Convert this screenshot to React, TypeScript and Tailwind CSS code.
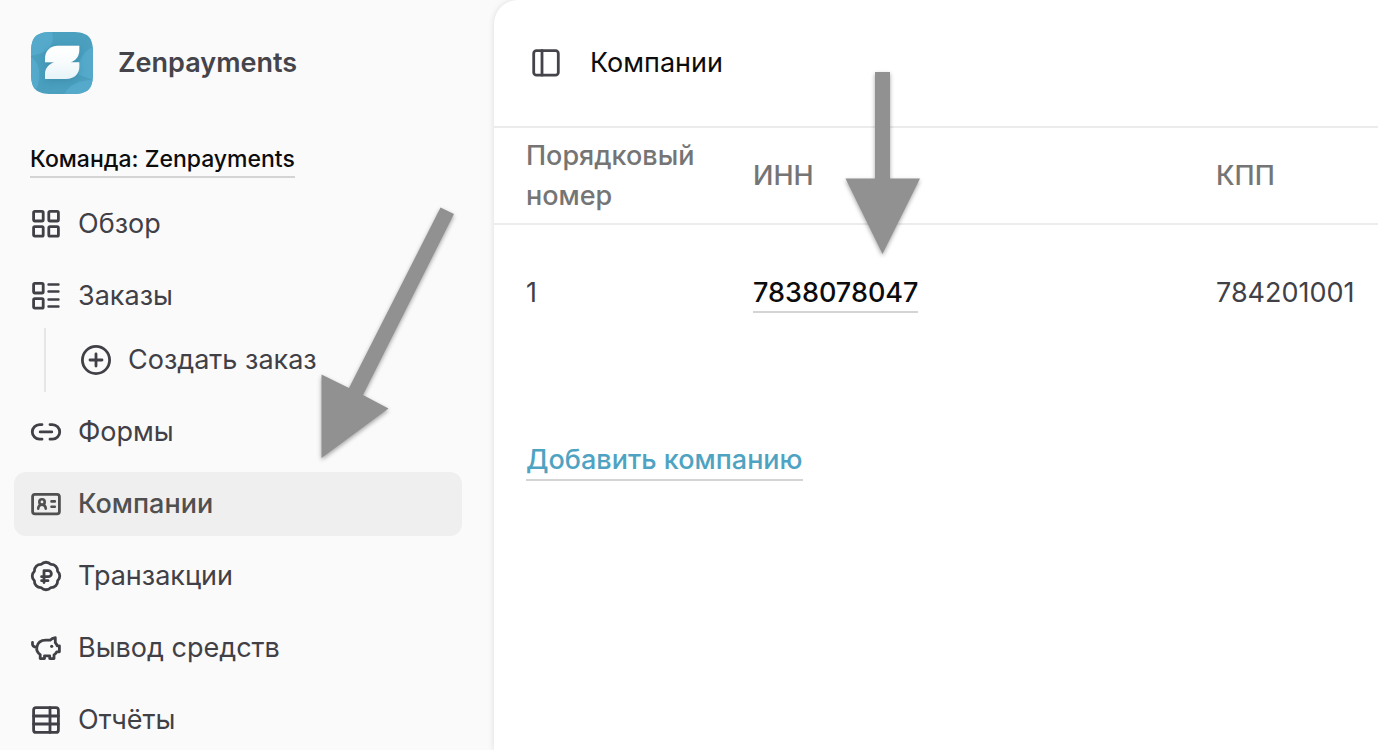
import type { ReactNode } from "react"

interface NavItem {
  label: string,
  icon: ReactNode,
  active?: boolean,
  children?: NavItem[]
}

interface Company {
  id: number,
  inn: string,
  kpp: string
}

function Icon(props: {children: ReactNode}) {
  return (
    <svg
      viewBox="0 0 32 32"
      fill="none"
      stroke="currentColor"
      strokeWidth="2.8"
      strokeLinecap="round"
      strokeLinejoin="round"
      className="size-8 shrink-0"
      aria-hidden="true"
    >
      {props.children}
    </svg>
  )
}

const GridIcon = () => (
  <Icon>
    <rect x="3.6" y="3.4" width="9.6" height="9.6" rx="1.2" />
    <rect x="18.8" y="3.4" width="9.6" height="9.6" rx="1.2" />
    <rect x="3.6" y="18.6" width="9.6" height="9.6" rx="1.2" />
    <rect x="18.8" y="18.6" width="9.6" height="9.6" rx="1.2" />
  </Icon>
)

const OrdersIcon = () => (
  <Icon>
    <rect x="3.6" y="3.4" width="9.6" height="9.6" rx="1.2" />
    <rect x="3.6" y="18.6" width="9.6" height="9.6" rx="1.2" />
    <path strokeWidth="2.4" d="M18.5 4.5h10M18.5 11.5h10M18.5 19.500h10M18.5 26.500h10" />
  </Icon>
)

const PlusIcon = () => (
  <Icon>
    <circle cx="16" cy="16" r="13.6" />
    <path d="M16 10v12M10 16h12" />
  </Icon>
)

const LinkIcon = () => (
  <Icon>
    <path d="M12 8.6H9.6a7.2 7.2 0 0 0 0 14.6H12M20 8.6h2.400a7.2 7.2 0 0 1 0 14.6H20M10.2 15.9h11.6" />
  </Icon>
)

const CardIcon = () => (
  <Icon>
    <rect x="2.6" y="6.4" width="26.8" height="19.400" rx="2.4" />
    <path strokeWidth="2.6" d="M8.200 20.600c.2-2.400 1.800-3.900 3.800-3.900s3.600 1.500 3.800 3.900M21.500 13.400h3.300M21.500 18.800h3.300" />
    <circle strokeWidth="2.6" cx="12" cy="14" r="2.7" />
  </Icon>
)

const RubleIcon = () => (
  <Icon>
    <path d="M11.2 4.4a6.4 6.4 0 0 1 9.6 0a6.400 6.400 0 0 1 6.800 6.800a6.400 6.400 0 0 1 0 9.600a6.400 6.400 0 0 1-6.800 6.800a6.400 6.400 0 0 1-9.600 0a6.400 6.400 0 0 1-6.800-6.800a6.400 6.400 0 0 1 0-9.600a6.400 6.400 0 0 1 6.800-6.800Z" />
    <path d="M14 22.5V10.6h4.3a3 3 0 0 1 0 6.1h-6.700M11.6 20.700h6.400" />
  </Icon>
)

const PiggyIcon = () => (
  <Icon>
    <path d="M2.500 10.500c-.5 3 1 4.800 4.300 4.800M6.800 15.300C7.600 10.800 11 8.200 16 8.200h4.200c1.300-1.600 3-2.400 5.100-2.600v5.200c.9.900 1.500 1.900 1.900 3h2.200v6h-2.700c-.7 1.300-1.500 2.200-2.700 3v3.800h-4.300v-2.800h-5.200v2.800h-4.300v-4C7.600 20.800 6.300 18.400 6.800 15.300Z" />
    <circle cx="21.7" cy="14.3" r="1.6" fill="currentColor" stroke="none" />
  </Icon>
)

const TableIcon = () => (
  <Icon>
    <rect x="3.6" y="3.6" width="24.8" height="24.8" rx="2.5" />
    <path d="M3.6 12h24.8M3.6 20h24.8M20 3.6v24.8" />
  </Icon>
)

const PanelIcon = () => (
  <Icon>
    <rect x="3.7" y="3.600" width="24.600" height="24.600" rx="2.8" />
    <path d="M12 3.600v24.600" />
  </Icon>
)

const Logo = () => (
  <svg viewBox="0 0 64 64" className="size-16 shrink-0" role="img" aria-label="Zenpayments">
    <defs>
      <linearGradient id="mark" x1="0" y1="0" x2="0" y2="1">
        <stop offset="0" stopColor="#ffffff" />
        <stop offset="0.500" stopColor="#f8fcfd" />
        <stop offset="1" stopColor="#e6f3f8" />
      </linearGradient>
      <clipPath id="tile">
        <path d="M1 22C1 6 6 1 22 1h20c16 0 21 5 21 21v20c0 16-5 21-21 21H22C6 63 1 58 1 42Z" />
      </clipPath>
      <filter id="soft" x="-30%" y="-30%" width="160%" height="160%">
        <feDropShadow dx="0" dy="2" stdDeviation="4" floodColor="#25718c" floodOpacity="0.4" />
      </filter>
    </defs>
    <g clipPath="url(#tile)">
      <rect width="64" height="64" fill="#4b9fbf" />
      <path d="M0 0h22c3 12-1 22-21 25Z" fill="#55aacb" />
      <path d="M0 25c9 6 12 18 7 32L0 60Z" fill="#55aacb" />
      <path d="M64 16C52 20 47 32 49 44l15 5Z" fill="#55aacb" />
      <path d="M64 49c-15 0-26 5-30 15h30Z" fill="#55aacb" />
    </g>
    <path
      d="M28 14.700H49.300V19C49.300 26 45 30 40.500 31.300H49.300V36C49.300 43 44 48 36 48H15V43C15 37 19.500 33 24 31.300H15V28C15 20 20 14.700 28 14.700Z"
      fill="url(#mark)"
      filter="url(#soft)"
    />
  </svg>
)

const navItems: NavItem[] = [
  { label: "Обзор", icon: <GridIcon /> },
  {
    label: "Заказы",
    icon: <OrdersIcon />,
    children: [{ label: "Создать заказ", icon: <PlusIcon /> }],
  },
  { label: "Формы", icon: <LinkIcon /> },
  { label: "Компании", icon: <CardIcon />, active: true },
  { label: "Транзакции", icon: <RubleIcon /> },
  { label: "Вывод средств", icon: <PiggyIcon /> },
  { label: "Отчёты", icon: <TableIcon /> },
]

const companies: Company[] = [
  { id: 1, inn: "7838078047", kpp: "784201001" },
]

function NavLink(props: {item: NavItem}) {
  const { item } = props
  return (
    <a
      href="#"
      aria-current={item.active ? "page" : undefined}
      className={
        item.active
          ? "flex h-16 items-center gap-4 rounded-xl bg-[#efefef] px-4 font-medium text-[#505050]"
          : "flex h-16 items-center gap-4 rounded-xl px-4 text-[#414046]"
      }
    >
      {item.icon}
      {item.label}
    </a>
  )
}

function Sidebar() {
  return (
    <aside className="w-[494px] shrink-0 pl-[14px] pr-8 pt-[31px]">
      <div className="flex items-center gap-6 pl-4">
        <Logo />
        <span className="font-semibold text-[#45444b]">Zenpayments</span>
      </div>
      <div className="mt-12 pb-[14px] pl-4">
        <button className="block border-b-2 border-[#d4d4d4] text-[23px] font-medium leading-[33px] text-[#0c0c0c]">
          Команда: Zenpayments
        </button>
      </div>
      <nav>
        <ul className="flex flex-col gap-2">
          {
            navItems.map(
              item =>
              <li key={item.label}>
                <NavLink item={item} />
                {item.children && (
                  <ul className="ml-[30px] border-l-2 border-[#e6e6e6] pl-[18px]">
                    {item.children.map(child => <li key={child.label}><NavLink item={child} /></li>)}
                  </ul>
                )}
              </li>
            )
          }
        </ul>
      </nav>
    </aside>
  )
}

function CompaniesTable() {
  return (
    <table className="w-full table-fixed text-left">
      <thead>
        <tr className="h-24 border-b-2 border-[#ececec] leading-10 text-[#757575]">
          <th className="w-[227px] pl-8 font-medium">Порядковый номер</th>
          <th className="w-[463px] pl-8 font-medium">ИНН</th>
          <th className="pl-8 font-medium">КПП</th>
        </tr>
      </thead>
      <tbody>
        {
          companies.map(
            company =>
            <tr key={company.id} className="h-[136px] text-[#414046]">
              <td className="pl-8">{company.id}</td>
              <td className="pl-8">
                <a href="#" className="inline-block border-b-2 border-[#d4d4d4] font-medium leading-9 text-[#0c0c0c]">{company.inn}</a>
              </td>
              <td className="pl-8">{company.kpp}</td>
            </tr>
          )
        }
      </tbody>
    </table>
  )
}

// Callout arrows laid over the page, each one points at the next thing to click
function Arrows() {
  return (
    <>
      <svg
        viewBox="0 0 140 260"
        className="pointer-events-none absolute left-[318px] top-[204px] w-[140px] drop-shadow-[0_2px_2px_rgba(0,0,0,0.35)]"
        aria-hidden="true"
      >
        <path d="M122.5 3.5 136 10 45 191l25.5 13.500L3.500 254V170.500L31 184Z" fill="#919191" />
      </svg>
      <svg
        viewBox="0 0 80 190"
        className="pointer-events-none absolute left-[843px] top-[70px] w-20 drop-shadow-[0_2px_2px_rgba(0,0,0,0.35)]"
        aria-hidden="true"
      >
        <path d="M32 2h15v106.500h30L39.500 184 2.500 108.500H32Z" fill="#919191" />
      </svg>
    </>
  )
}

export default function App() {
  return (
    <div className="relative flex h-screen overflow-hidden bg-[#fafafa] font-['Inter','Noto_Sans',sans-serif] text-[27px] leading-10">
      <Sidebar />
      <main className="min-w-0 grow rounded-tl-3xl bg-white shadow-[0_0_6px_rgba(0,0,0,0.12)]">
        <header className="flex h-32 items-center gap-7 border-b-2 border-[#ececec] px-9 text-[#0c0c0c]">
          <button aria-label="Свернуть меню" className="text-[#45444b]">
            <PanelIcon />
          </button>
          <h1>Компании</h1>
        </header>
        <CompaniesTable />
        <div className="mt-20 px-8">
          <a href="#" className="inline-block border-b-2 border-[#d4d4d4] font-medium leading-[38px] text-[#4fa3c2]">Добавить компанию</a>
        </div>
      </main>
      <Arrows />
    </div>
  )
}
